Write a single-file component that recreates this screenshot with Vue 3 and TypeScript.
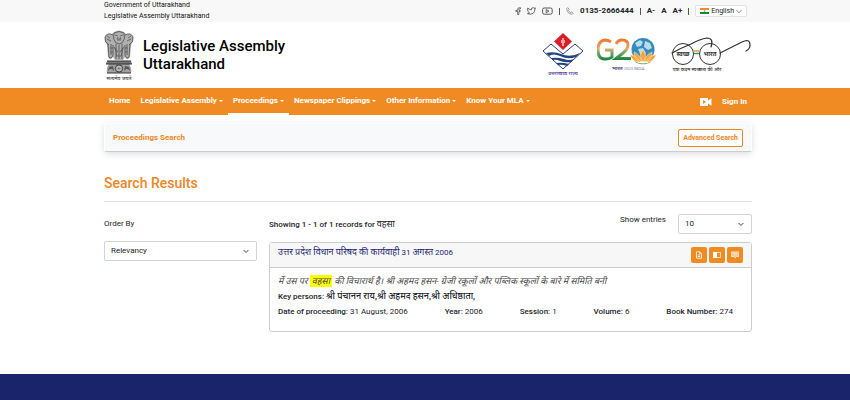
<script setup lang="ts">
import { ref } from 'vue'

interface NavItem { label: string; menu: boolean; active?: boolean }

const nav: NavItem[] = [
  { label: 'Home', menu: false },
  { label: 'Legislative Assembly', menu: true },
  { label: 'Proceedings', menu: true, active: true },
  { label: 'Newspaper Clippings', menu: true },
  { label: 'Other Information', menu: true },
  { label: 'Know Your MLA', menu: true },
]

const facts: { label: string; value: string }[] = [
  { label: 'Date of proceeding:', value: '31 August, 2006' },
  { label: 'Year:', value: '2006' },
  { label: 'Session:', value: '1' },
  { label: 'Volume:', value: '6' },
  { label: 'Book Number:', value: '274' },
]

const order = ref('Relevancy')
const entries = ref('10')
</script>

<template>
  <div class="page">
    <div class="topbar wrap">
      <div class="gov">
        <div>Government of Uttarakhand</div>
        <div>Legislative Assembly Uttarakhand</div>
      </div>
      <div class="tools">
        <a href="#" aria-label="Facebook" class="social">
          <svg width="6" height="8" viewBox="0 0 6 8"><path d="M5.6.7H4.4Q2.6.7 2.6 2.4V3.4H.8V4.5H2.6V7.5H3.9V4.5H5.2V3.4H3.9V2.4Q3.9 1.8 4.6 1.8H5.6Z" fill="none" stroke="#444" stroke-width=".7" /></svg>
        </a>
        <a href="#" aria-label="Twitter" class="social">
          <svg width="9" height="8" viewBox="0 0 9 8"><path d="M.7 1Q2.2 2.8 4.4 2.7Q4.3.7 6 .7Q6.9.7 7.3 1.3L8.5.9L7.9 2.3Q7.8 5 6.2 6.3Q3.8 8 .5 6.6Q1.9 6.6 2.5 6Q1.3 5.4 1 4.2Q.3 2.5.7 1Z" fill="none" stroke="#444" stroke-width=".8" /></svg>
        </a>
        <a href="#" aria-label="YouTube" class="social">
          <svg width="11" height="8" viewBox="0 0 11 8"><rect x=".6" y="1" width="9.6" height="6.2" rx="1.6" fill="none" stroke="#444" stroke-width=".9" /><path d="M4.2 2.6L7 4.1L4.2 5.6Z" fill="none" stroke="#444" stroke-width=".8" /></svg>
        </a>
        <i class="bar"></i>
        <a href="tel:01352666444" class="phone">
          <svg width="8" height="8" viewBox="0 0 8 8"><path d="M1.7.6L.7 1.6Q.9 6.5 6.2 7.3L7.3 6.2L5.6 4.9L4.7 5.6Q3 4.9 2.4 3.3L3.1 2.4Z" fill="none" stroke="#777" stroke-width=".7" /></svg>
          <span>0135-2666444</span>
        </a>
        <i class="bar"></i>
        <button type="button" class="size">A-</button>
        <button type="button" class="size">A</button>
        <button type="button" class="size">A+</button>
        <i class="bar"></i>
        <button type="button" class="lang">
          <svg width="9" height="6" viewBox="0 0 9 6"><path d="M0 0H9V2H0Z" fill="#f58a25" /><path d="M0 2H9V4H0Z" fill="#fff" /><path d="M0 4H9V6H0Z" fill="#178a2f" /><circle cx="4.5" cy="3" r=".8" fill="#6b73b5" /></svg>
          <span>English</span>
          <svg width="6" height="5" viewBox="0 0 6 5"><path d="M.5 1L3 3.8L5.5 1" fill="none" stroke="#777" stroke-width=".8" /></svg>
        </button>
      </div>
    </div>

    <header class="brand wrap">
      <a href="#" class="identity">
        <svg class="emblem" width="30" height="51" viewBox="0 0 30 51" role="img" aria-label="State emblem">
          <path d="M10 2Q15-1 20 2L22 4Q27 3 29 7Q30 11 27 15L26 27Q23 31 21 27L19 30H11L9 27Q6 31 4 27L3 15Q0 11 1 7Q3 3 8 4Z" fill="#b0b0b0" />
          <path d="M10 3Q15 0 20 3Q22 9 18 13Q15 15 12 13Q8 9 10 3ZM9 5Q3 2 1 7Q0 12 5 15M21 5Q27 2 29 7Q30 12 25 15M4 14L5 27Q7 30 9 25V15M26 14L25 27Q23 30 21 25V15M12 14V29M18 14V29M15 15V29M10 17L14 22M20 17L16 22M7 14V25M23 14V25M3 9L7 11M27 9L23 11" fill="none" stroke="#4c4c4c" stroke-width=".8" />
          <path d="M11 5L14 6M19 5L16 6M13 10H17M14 7L13 9H17L16 7M3 6L6 8M27 6L24 8M6 18H9M21 18H24M6 22H9M21 22H24M12 26H18M11 18L13 26M19 18L17 26" fill="none" stroke="#555" stroke-width=".7" />
          <path d="M3 31H27L28 34H2Z" fill="#777" /><path d="M5 34H25Q28 38 27 43H3Q2 38 5 34Z" fill="#a0a0a0" />
          <path d="M3 31H27M2 34H28M3 43H27" stroke="#333" />
          <circle cx="15" cy="38.5" r="3.6" fill="#d5d5d5" stroke="#333" />
          <path d="M15 35V42M11.5 38.5H18.5M12.5 36L17.5 41M17.5 36L12.5 41" stroke="#666" stroke-width=".5" />
          <path d="M4 41L5 37L9 36L10 41L8 39L6 39ZM26 41L25 37L21 36L20 41L22 39L24 39Z" fill="#555" />
          <text x="15" y="50" text-anchor="middle" font-size="5" font-weight="500" fill="#444">सत्यमेव जयते</text>
        </svg>
        <span class="title">Legislative Assembly<br />Uttarakhand</span>
      </a>
      <div class="logos">
        <svg width="42" height="44" viewBox="0 0 42 44" role="img" aria-label="Uttarakhand">
          <path d="M9 11L1 18L21 36L41 18L33 11L21 21Z" fill="#fff" stroke="#263b7a" stroke-width="1" />
          <path d="M21 0L30 8.5L21 17L12 8.5Z" fill="#dc1e2b" />
          <path d="M20 5H22V7H23V10H22V13H20V10H19V7H20Z" fill="#f6a7a2" />
          <path d="M4 20Q12 18 19 21Q28 25 38 20L34 24Q26 27 18 23Q11 20 7 23ZM9 25Q16 24 22 26Q27 28 32 26L29 29Q24 30 18 28Q14 26 11 27ZM14 30Q20 29 27 31L25 33Q20 31 16 32Z" fill="#23457f" />
          <text x="21" y="42" text-anchor="middle" font-size="5" font-weight="500" fill="#4b3794">उत्तराखण्ड राज्य</text>
        </svg>
        <svg width="61" height="36" viewBox="1 0 61 36" role="img" aria-label="G20">
          <defs>
            <linearGradient id="tricolor" gradientUnits="userSpaceOnUse" x1="0" y1="2" x2="0" y2="23"><stop stop-color="#ed792b" /><stop offset=".48" stop-color="#e8a86c" /><stop offset=".6" stop-color="#7daf69" /><stop offset="1" stop-color="#15833d" /></linearGradient>
          </defs>
          <path d="M15 5Q12 3 9 3Q2 4 2 13Q2 22 9 22Q14 22 16 20V13H9M20 7Q22 3 26 3Q32 3 32 8Q32 12 27 16L20 21.5H35" fill="none" stroke="url(#tricolor)" stroke-width="3" />
          <circle cx="47" cy="12.5" r="11.5" fill="#358abc" />
          <path d="M39 6L44 3L47 5L45 9L41 10ZM49 4L54 6L56 11L52 13L48 10ZM42 12L47 11L50 16L47 20L44 17Z" fill="#b9dce8" />
          <path d="M47 13Q42 18 47 25Q52 18 47 13ZM46 25Q38 24 38 15Q44 17 46 25ZM48 25Q56 24 56 15Q50 17 48 25ZM45 25Q37 26 34 18Q40 18 45 25ZM49 25Q57 26 60 18Q54 18 49 25Z" fill="#f8a33c" stroke="#fff0ca" stroke-width=".5" />
          <path d="M38 24Q47 29 56 24Q52 28 47 27Q42 28 38 24Z" fill="#5b9a42" />
          <text x="16" y="33" font-size="5" font-weight="700" fill="#494a83">भारत</text>
          <text x="28" y="33" font-size="4" fill="#7479a0">2023 INDIA</text>
        </svg>
        <svg width="81" height="38" viewBox="0 0 81 38" role="img" aria-label="स्वच्छ भारत">
          <circle cx="12" cy="18" r="10.5" fill="none" stroke="#343434" /><circle cx="39" cy="18" r="10.5" fill="none" stroke="#343434" />
          <path d="M1 17Q10 12 20 8Q29 3 36 2Q43 2 40 11M49 17L71 6Q79 2 79 9Q79 13 75 15" fill="none" stroke="#303030" stroke-width="1.2" stroke-linecap="round" />
          <path d="M23 15H28" stroke="#f49229" stroke-width="1.4" /><path d="M23 17.5H28" stroke="#2f9951" stroke-width="1.4" />
          <text x="12" y="20" text-anchor="middle" font-size="6" font-weight="700" fill="#333">स्वच्छ</text>
          <text x="39" y="20" text-anchor="middle" font-size="6" font-weight="700" fill="#333">भारत</text>
          <text x="26" y="35" text-anchor="middle" font-size="5" font-weight="500" fill="#333">एक कदम स्वच्छता की ओर</text>
        </svg>
      </div>
    </header>

    <nav class="nav wrap">
      <a v-for="item in nav" :key="item.label" href="#" class="navlink" :class="{ active: item.active }">
        {{ item.label }}<i v-if="item.menu" class="caret"></i>
      </a>
      <a href="#" class="camera" aria-label="Live video">
        <svg width="12" height="8" viewBox="0 0 12 8"><path fill-rule="evenodd" d="M0 0H8V2.5L11.5.2V7.8L8 5.5V8H0ZM3 2.1V5.9L6 4Z" fill="#fff" /></svg>
      </a>
      <a href="#" class="signin">Sign In</a>
    </nav>

    <main class="content">
      <section class="search">
        <h2>Proceedings Search</h2>
        <button type="button" class="advanced">Advanced Search</button>
      </section>

      <h1>Search Results</h1>

      <div class="results">
        <aside>
          <label for="order">Order By</label>
          <div class="select">
            <select id="order" v-model="order"><option>Relevancy</option><option>Date</option></select>
            <svg width="6" height="5" viewBox="0 0 6 5"><path d="M.6 1L3 3.5L5.4 1" fill="none" stroke="#444" /></svg>
          </div>
        </aside>
        <div>
          <div class="summary">
            <p><b>Showing 1 - 1 of 1 records for</b> <span class="hindi">वहसा</span></p>
            <div class="entries">
              <label for="entries">Show entries</label>
              <div class="select small">
                <select id="entries" v-model="entries"><option>10</option><option>25</option><option>50</option></select>
                <svg width="6" height="5" viewBox="0 0 6 5"><path d="M.6 1L3 3.5L5.4 1" fill="none" stroke="#444" /></svg>
              </div>
            </div>
          </div>
          <article class="card">
            <div class="cardhead">
              <a href="#"><span class="hindi">उत्तर प्रदेश विधान परिषद की कार्यवाही</span> 31 <span class="hindi">अगस्त</span> 2006</a>
              <div class="actions">
                <button type="button" aria-label="Open document">
                  <svg width="6" height="8" viewBox="0 0 6 8"><path d="M.5.8H3.7L5.5 2.6V7.2H.5ZM3.7.8V2.6H5.5M1.7 4H4.3M1.7 5.5H4.3" fill="none" stroke="#fff" stroke-width=".8" /></svg>
                </button>
                <button type="button" aria-label="Read book">
                  <svg width="8" height="6" viewBox="0 0 8 6"><path d="M0 0H4V6H0Z" fill="#fff" /><path d="M4 .4H7.6V5.6H4" fill="none" stroke="#fff" stroke-width=".8" /></svg>
                </button>
                <button type="button" aria-label="View excerpt">
                  <svg width="8" height="8" viewBox="0 0 8 8"><path d="M.4.9H7.6V5.5H5.5L4 7L3.5 5.5H.4Z" fill="#fff" fill-opacity=".4" stroke="#fff" stroke-width=".7" /><path d="M1.5 2.4H6.5M1.5 4H6.5" stroke="#fff" stroke-width=".6" /></svg>
                </button>
              </div>
            </div>
            <div class="cardbody">
              <p class="excerpt hindi">में उस पर <mark>वहसा</mark> की विचारार्थ है। श्री अहमद हसन- ग्रेजी रकूलों और पब्लिक स्कूलों के बारे में समिति बनी</p>
              <p class="persons">Key persons: <span class="hindi">श्री पंचानन राय,श्री अहमद हसन,श्री अधिष्ठाता,</span></p>
              <div class="facts">
                <span v-for="f in facts" :key="f.label"><b>{{ f.label }}</b> {{ f.value }}</span>
              </div>
            </div>
          </article>
        </div>
      </div>
    </main>
    <footer></footer>
  </div>
</template>

<style>
body { margin: 0; background: #fff; }
</style>

<style scoped>
.page { min-height: 100vh; display: flex; flex-direction: column; font: 8px/12px Roboto, "Noto Sans Devanagari", "Noto Sans", sans-serif; color: #212529; }
.page * { box-sizing: border-box; }
a { color: inherit; text-decoration: none; }
button, select { font: inherit; color: inherit; }
button { cursor: pointer; }
svg { display: block; flex: none; }
p, h1, h2 { margin: 0; }
b { font-weight: 500; }
.hindi { font-size: 9px; }
.wrap, .content { padding-left: 104px; padding-right: 98px; }
.topbar { height: 22px; background: #f8f8f8; display: flex; justify-content: space-between; align-items: center; }
.gov { font-size: 7px; line-height: 11px; color: #111; }
.tools { display: flex; align-items: center; gap: 6px; padding-right: 5px; }
.social { display: flex; }
.bar { width: 1px; height: 7px; background: #555; }
.phone { display: flex; align-items: center; gap: 6px; font-weight: 700; }
.size { border: 0; background: none; padding: 0; font-weight: 700; }
.lang { display: flex; align-items: center; gap: 2px; height: 12px; padding: 0 4px; border: 1px solid #e2e2e2; border-radius: 2px; background: #fff; font-size: 7px; }
.brand { height: 66px; display: flex; justify-content: space-between; align-items: center; }
.identity { display: flex; align-items: center; gap: 9px; }
.title { font-size: 15px; line-height: 18px; font-weight: 500; color: #000; }
.logos { display: flex; align-items: center; gap: 13px; }
.nav { height: 27px; display: flex; background: #f08b24; color: #fff; font-weight: 700; }
.navlink { display: flex; align-items: center; gap: 2px; padding: 0 5px; border-bottom: 2px solid transparent; white-space: nowrap; }
.active { border-color: #fff; }
.caret { border: 2px solid transparent; border-top-color: #fff; border-bottom: 0; }
.camera { margin-left: auto; align-self: center; }
.signin { padding: 0 5px 0 10px; align-self: center; }
.search { margin-top: 8px; height: 29px; padding: 0 8px; display: flex; align-items: center; justify-content: space-between; background: #f8f9fb; border: 1px solid #fff; border-bottom-color: #ccc; border-radius: 3px; box-shadow: 0 2px 7px #0002; }
h2 { font-size: 8px; line-height: 12px; font-weight: 700; color: #ee8524; }
.advanced { height: 18px; padding: 0 4px; border: 1px solid #ee8524; border-radius: 2px; background: #fff; color: #ee8524; font-size: 7px; font-weight: 700; }
h1 { margin-top: 22px; padding-bottom: 9px; border-bottom: 1px solid #dee2e6; font-size: 14px; line-height: 18px; font-weight: 500; color: #ee8524; }
.results { display: grid; grid-template-columns: 153px 1fr; gap: 12px; padding-top: 12px; }
aside label { display: block; margin: 4px 0 11px; }
.select { position: relative; }
.select select { appearance: none; display: block; width: 100%; height: 20px; padding: 0 6px; border: 1px solid #ced4da; border-radius: 2px; background: #fff; }
.select svg { position: absolute; right: 8px; top: 8px; pointer-events: none; }
.summary { display: flex; justify-content: space-between; margin-bottom: 8px; }
.summary p { padding-top: 4px; }
.entries { display: flex; gap: 12px; }
.small { width: 74px; }
.card { border: 1px solid #ccc; border-radius: 3px; }
.cardhead { height: 25px; padding: 0 8px; display: flex; justify-content: space-between; align-items: center; background: #f7f7f7; border-bottom: 1px solid #ccc; }
.cardhead a { color: #1c2674; padding-bottom: 5px; }
.actions { display: flex; gap: 2px; }
.actions button { width: 16px; height: 16px; padding: 0; border: 0; border-radius: 2px; background: #f08b24; display: grid; place-items: center; }
.cardbody { padding: 6px 18px 12px 8px; }
.excerpt { line-height: 14px; font-style: italic; color: #444; }
mark { display: inline-block; line-height: 12px; padding: 0 2px; background: #ff0; color: inherit; }
.persons { line-height: 16px; font-weight: 500; }
.facts { display: flex; justify-content: space-between; line-height: 14px; }
footer { height: 26px; margin-top: auto; background: #19246b; }
</style>
